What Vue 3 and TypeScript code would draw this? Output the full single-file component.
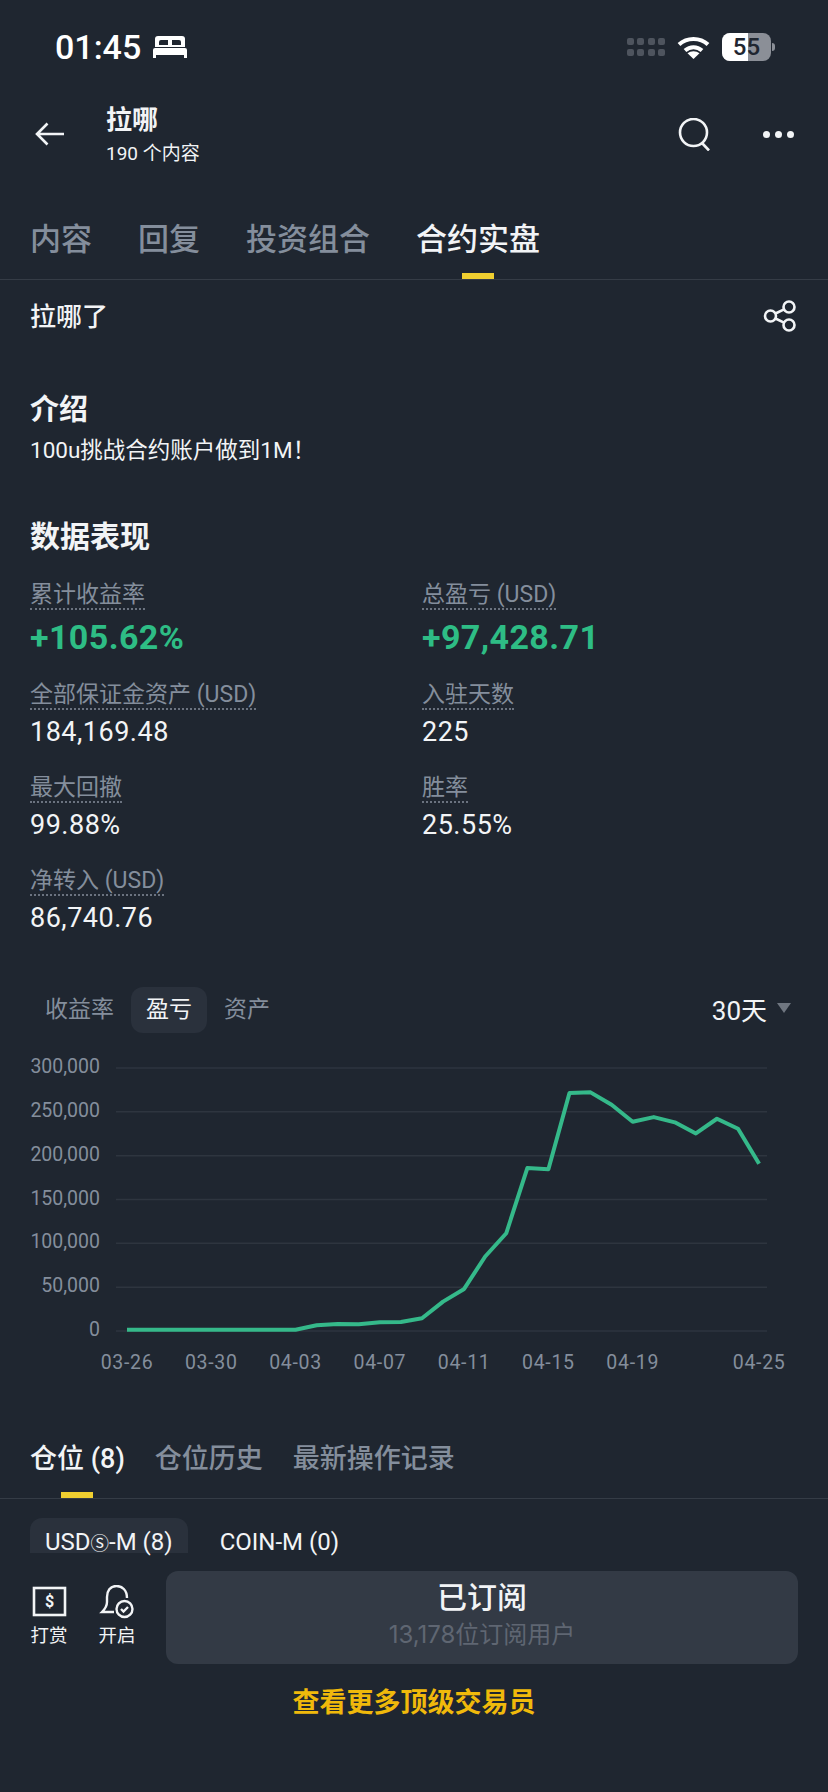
<template>
  <div class="page">
    <div class="status-bar">
      <span class="time">01:45</span>
      <svg class="bed" width="34" height="22" viewBox="0 0 34 22">
        <path fill="#fff" d="M5 0h24a3 3 0 0 1 3 3v8H2V3a3 3 0 0 1 3-3z" />
        <path fill="#1f2630" d="M6 9V6a2 2 0 0 1 2-2h7v5zM28 9V6a2 2 0 0 0-2-2h-7v5z" />
        <path fill="#fff" d="M2 12h30a2 2 0 0 1 2 2v8h-3v-3H3v3H0v-8a2 2 0 0 1 2-2z" />
      </svg>
      <div class="status-right">
        <div class="signal">
          <i v-for="n in 8" :key="n"></i>
        </div>
        <svg class="wifi" width="33" height="24" viewBox="0 0 33 24" fill="none" stroke="#fff" stroke-width="4">
          <path d="M2 9.500C10 2 23 2 31 9.500" />
          <path d="M8 15.500C13 11 20 11 25 15.500" />
          <path fill="#fff" stroke="none" d="M16.500 24l-6-5.800c3.400-2.700 8.600-2.700 12 0z" />
        </svg>
        <div class="battery">
          <div class="battery-level"></div>
          <span>55</span>
        </div>
        <div class="battery-nub"></div>
      </div>
    </div>

    <div class="nav">
      <svg class="back" width="30" height="24" viewBox="0 0 30 24" fill="none" stroke="#f2f4f6" stroke-width="2.600">
        <path d="M29 12H2M12.500 1.500L2 12l10.500 10.500" />
      </svg>
      <div class="nav-title">
        <div class="name">拉哪</div>
        <div class="count">190 个内容</div>
      </div>
      <svg class="search" width="32" height="33" viewBox="0 0 32 33" fill="none" stroke="#f2f4f6" stroke-width="2.600">
        <circle cx="15.500" cy="14.500" r="13.500" />
        <path d="M24 25l7 7.500" />
      </svg>
      <div class="more"><i></i><i></i><i></i></div>
    </div>

    <div class="tabs main-tabs">
      <div v-for="tab in mainTabs" :key="tab" class="tab" :class="{ active: tab === '合约实盘' }">{{ tab }}</div>
    </div>

    <div class="owner">
      <span>拉哪了</span>
      <svg width="34" height="32" viewBox="0 0 34 32" fill="none" stroke="#f2f4f6" stroke-width="2.600">
        <circle cx="7.500" cy="16" r="5.500" />
        <circle cx="26" cy="7" r="5.500" />
        <circle cx="26" cy="25" r="5.500" />
        <path d="M12.500 13.500l8.500-4.200M12.500 18.500l8.500 4.200" />
      </svg>
    </div>

    <h2 class="intro-title">介绍</h2>
    <p class="intro">100u挑战合约账户做到1M！</p>

    <h2 class="data-title">数据表现</h2>
    <div class="stats">
      <div v-for="stat in stats" :key="stat.label" class="stat">
        <span class="stat-label">{{ stat.label }}</span>
        <div class="stat-value" :class="{ hero: stat.hero }">{{ stat.value }}</div>
      </div>
    </div>

    <div class="chart-head">
      <div class="chart-tab">收益率</div>
      <div class="chart-tab active">盈亏</div>
      <div class="chart-tab">资产</div>
      <div class="range">30天<i></i></div>
    </div>

    <svg class="chart" width="828" height="330" viewBox="0 0 828 330">
      <g v-for="tick in yTicks" :key="tick">
        <line x1="116" x2="767" :y1="toY(tick)" :y2="toY(tick)" stroke="#2e353f" stroke-width="1.500" />
        <text x="100" :y="toY(tick)" class="axis" text-anchor="end" dominant-baseline="middle">{{ tick.toLocaleString('en-US') }}</text>
      </g>
      <polyline :points="linePoints" fill="none" stroke="#35b98a" stroke-width="4" stroke-linejoin="round" />
      <text v-for="label in xLabels" :key="label.text" :x="toX(label.i)" y="314" class="axis axis-date" text-anchor="middle" dominant-baseline="middle">{{ label.text }}</text>
    </svg>

    <div class="tabs position-tabs">
      <div v-for="tab in positionTabs" :key="tab" class="tab" :class="{ active: tab === '仓位 (8)' }">{{ tab }}</div>
    </div>

    <div class="market-tabs">
      <div class="market active">USD<span class="coin-s">Ⓢ</span>-M (8)</div>
      <div class="market">COIN-M (0)</div>
    </div>

    <div class="bottom-bar">
      <div class="action">
        <svg width="36" height="34" viewBox="0 0 36 34" fill="none" stroke="#f2f4f6" stroke-width="2.600">
          <rect x="3" y="3" width="31" height="27" />
          <text x="18.500" y="22" class="dollar" text-anchor="middle">$</text>
        </svg>
        <span>打赏</span>
      </div>
      <div class="action">
        <svg width="36" height="34" viewBox="0 0 36 34" fill="none" stroke="#f2f4f6" stroke-width="2.400">
          <path d="M28 13C28 5 23 1 17.500 1C11 1 8 6 8 12V17C8 21 6 24 3 27H15" />
          <circle cx="25.500" cy="24" r="8" />
          <path d="M22 24l2.500 2.500 4.500-4.500" />
        </svg>
        <span>开启</span>
      </div>
      <div class="subscribe">
        <div class="subscribe-title">已订阅</div>
        <div class="subscribe-count">13,178位订阅用户</div>
      </div>
    </div>

    <div class="more-link">查看更多顶级交易员</div>
  </div>
</template>

<script setup lang="ts">
import { computed } from 'vue'

const mainTabs = ['内容', '回复', '投资组合', '合约实盘']
const positionTabs = ['仓位 (8)', '仓位历史', '最新操作记录']

const stats = [
  { label: '累计收益率', value: '+105.62%', hero: true },
  { label: '总盈亏 (USD)', value: '+97,428.71', hero: true },
  { label: '全部保证金资产 (USD)', value: '184,169.48' },
  { label: '入驻天数', value: '225' },
  { label: '最大回撤', value: '99.88%' },
  { label: '胜率', value: '25.55%' },
  { label: '净转入 (USD)', value: '86,740.76' }
]

const yTicks = [300000, 250000, 200000, 150000, 100000, 50000, 0]

const xLabels = [
  { i: 0, text: '03-26' },
  { i: 4, text: '03-30' },
  { i: 8, text: '04-03' },
  { i: 12, text: '04-07' },
  { i: 16, text: '04-11' },
  { i: 20, text: '04-15' },
  { i: 24, text: '04-19' },
  { i: 30, text: '04-25' }
]

const pnl = [
  1500, 1500, 1500, 1500, 1500, 1500, 1500, 1500, 1500, 6500, 8000, 7600, 9900, 10300, 14500, 33500,
  48000, 85000, 111500, 185800, 184600, 271400, 272200, 258100, 238700, 244000, 238000, 225400,
  242100, 230700, 190700
]

const toX = (i: number) => 127 + i * 21.07
const toY = (v: number) => 281 - v * (263 / 300000)

const linePoints = computed(() => pnl.map((v, i) => `${toX(i)},${toY(v)}`).join(' '))
</script>

<style>
html,
body {
  margin: 0;
  background: #1f2630;
}
</style>

<style scoped>
.page {
  width: 828px;
  height: 1792px;
  overflow: hidden;
  background: #1f2630;
  color: #f2f4f6;
  font-family: Roboto, "Noto Sans CJK SC", sans-serif;
}

.status-bar {
  height: 94px;
  padding-left: 55px;
  display: flex;
  align-items: center;
  box-sizing: border-box;
}

.time {
  font-size: 34px;
  font-weight: 500;
  color: #fff;
}

.bed {
  margin-left: 12px;
}

.status-right {
  margin-left: auto;
  padding-right: 53px;
  display: flex;
  align-items: center;
}

.signal {
  display: grid;
  grid-template-columns: repeat(4, 7px);
  gap: 4px 3.500px;
  margin-right: 12px;
}

.signal i {
  height: 7px;
  border-radius: 2px;
  background: #4e545e;
}

.wifi {
  margin-right: 12px;
}

.battery {
  position: relative;
  width: 49px;
  height: 28px;
  border-radius: 8px;
  overflow: hidden;
  background: #8b8f97;
  display: flex;
  align-items: center;
  justify-content: center;
  color: #1f2630;
  font-size: 24px;
  font-weight: 500;
}

.battery-level {
  position: absolute;
  left: 0;
  top: 0;
  bottom: 0;
  width: 26px;
  background: #fff;
}

.battery span {
  position: relative;
}

.battery-nub {
  width: 3px;
  height: 8px;
  margin-left: 1px;
  border-radius: 0 3px 3px 0;
  background: #8b8f97;
}

.nav {
  height: 74px;
  padding: 9px 34px 0 36px;
  display: flex;
  align-items: center;
  box-sizing: border-box;
}

.back {
  flex: none;
  margin: -3px 0 0 -1px;
}

.nav-title {
  margin-left: 41px;
  flex: 1;
}

.name {
  font-size: 26px;
  line-height: 34px;
  font-weight: 600;
}

.count {
  margin-top: 3px;
  font-size: 19px;
  line-height: 28px;
}

.search {
  margin: -3px 53px 0 0;
}

.more {
  display: flex;
  gap: 5px;
  margin-top: -3px;
}

.more i {
  width: 7px;
  height: 7px;
  border-radius: 50%;
  background: #f2f4f6;
}

.tabs {
  display: flex;
  border-bottom: 1.500px solid #353c46;
  box-sizing: border-box;
}

.tab {
  position: relative;
  color: #848e9c;
  white-space: nowrap;
}

.tab.active {
  color: #f2f4f6;
}

.tab.active::after {
  content: "";
  position: absolute;
  left: 50%;
  bottom: 0;
  width: 32px;
  height: 6px;
  margin-left: -16px;
  background: #f0cf30;
}

.main-tabs {
  padding: 50px 30px 0;
  gap: 46px;
  height: 112px;
  font-size: 31px;
  font-weight: 500;
}

.main-tabs .tab {
  height: 61px;
  line-height: 44px;
}

.owner {
  height: 36px;
  margin-top: 18px;
  padding: 0 31px 0 30px;
  display: flex;
  justify-content: space-between;
  align-items: center;
  font-size: 26px;
  font-weight: 500;
}

.owner span {
  margin-top: -4px;
}

.intro-title,
.data-title {
  margin: 0;
  padding: 0 30px;
  line-height: 40px;
  font-weight: 600;
}

.intro-title {
  margin-top: 56px;
  font-size: 29px;
}

.intro {
  margin: 5px 0 0;
  padding: 0 30px;
  font-size: 22.500px;
  line-height: 30px;
}

.data-title {
  margin-top: 52px;
  font-size: 30px;
}

.stats {
  margin-top: 25px;
  padding-left: 30px;
  display: grid;
  grid-template-columns: 392px 1fr;
  row-gap: 25px;
}

.stat-label {
  display: inline-block;
  height: 26px;
  line-height: 26px;
  border-bottom: 2px dotted #6b7380;
  color: #848e9c;
  font-size: 23px;
}

.stat-value {
  margin-top: 4px;
  font-size: 27px;
  letter-spacing: 0.5px;
  line-height: 36px;
  font-weight: 400;
}

.stat-value.hero {
  margin-top: 7px;
  font-size: 34px;
  letter-spacing: 0.4px;
  line-height: 40px;
  font-weight: 700;
  color: #2ebd85;
}

.chart-head {
  margin-top: 51px;
  padding: 0 37px 0 30px;
  display: flex;
  align-items: center;
  gap: 2px;
  height: 46px;
}

.chart-tab {
  padding: 0 15px;
  line-height: 46px;
  font-size: 23px;
  color: #848e9c;
  border-radius: 12px;
}

.chart-tab.active {
  background: #2a313c;
  color: #f2f4f6;
}

.range {
  margin: -4px 0 0 auto;
  display: flex;
  align-items: center;
  gap: 10px;
  font-size: 26px;
}

.range i {
  width: 0;
  height: 0;
  border-left: 7.500px solid transparent;
  border-right: 7.500px solid transparent;
  border-top: 10px solid #6f7680;
}

.chart {
  display: block;
  margin-top: 17px;
}

.axis {
  font-size: 19.500px;
  fill: #848e9c;
}

.axis-date {
  letter-spacing: 0.7px;
}

.position-tabs {
  margin-top: 60px;
  padding: 0 30px;
  gap: 30px;
  height: 59px;
  font-size: 27px;
  font-weight: 500;
}

.position-tabs .tab {
  line-height: 38px;
}

.market-tabs {
  margin-top: 19px;
  padding-left: 30px;
  height: 35px;
  display: flex;
  gap: 17px;
}

.market {
  flex: none;
  height: 35px;
  box-sizing: border-box;
  padding: 13px 15px 0;
  line-height: 22px;
  font-size: 24px;
  border-radius: 12px 12px 0 0;
}

.market.active {
  background: #2a313c;
}

.coin-s {
  font-size: 18.500px;
}

.bottom-bar {
  padding: 18px 30px 0;
  display: flex;
  align-items: flex-start;
}

.action {
  width: 38px;
  margin-right: 30px;
  padding-top: 14px;
  display: flex;
  flex-direction: column;
  align-items: center;
  font-size: 18.500px;
  white-space: nowrap;
}

.action svg {
  flex: none;
}

.action span {
  margin-top: 4px;
  line-height: 26px;
}

.dollar {
  font-size: 16px;
  font-weight: 700;
  fill: #f2f4f6;
  stroke: none;
}

.subscribe {
  flex: 1;
  height: 93px;
  border-radius: 12px;
  background: #333a45;
  text-align: center;
}

.subscribe-title {
  padding-top: 9px;
  font-size: 30px;
  line-height: 36px;
  font-weight: 500;
}

.subscribe-count {
  margin-top: 5px;
  font-family: Inter, "Noto Sans CJK SC", sans-serif;
  font-size: 24px;
  line-height: 28px;
  color: #5f6672;
}

.more-link {
  margin-top: 21px;
  text-align: center;
  font-size: 27px;
  line-height: 36px;
  font-weight: 600;
  color: #f0b90b;
}
</style>
